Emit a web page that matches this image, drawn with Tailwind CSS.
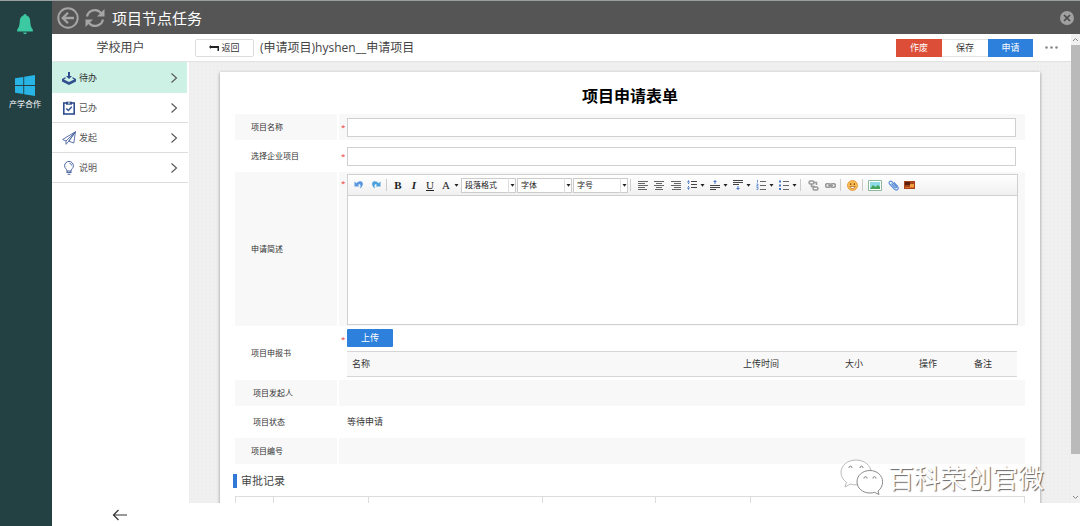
<!DOCTYPE html>
<html lang="zh-CN">
<head>
<meta charset="utf-8">
<title>项目节点任务</title>
<script src="https://cdn.jsdelivr.net/npm/@tailwindcss/browser@4"></script>
</head>
<body class="flex h-screen flex-col overflow-hidden border-t border-[#9a9f9f] bg-white font-['Open_Sans','Noto_Sans_CJK_SC',sans-serif] text-[#444]">
<svg class="hidden">
  <defs>
    <symbol id="chev" viewBox="0 0 8 12"><path d="M1.5 1.5 6.5 6l-5 4.5" fill="none" stroke="#555" stroke-width="1.1"/></symbol>
    <symbol id="caret" viewBox="0 0 5 3"><path d="M.5 0h4L2.500 2.700z" fill="#222"/></symbol>
  </defs>
</svg>
<div class="flex min-h-0 flex-1">
  <nav class="flex w-[52px] shrink-0 flex-col items-center bg-[#234143] pr-[2px]">
    <button aria-label="通知" class="mt-[13px]">
      <svg class="h-[21px] w-4" viewBox="0 0 16 21"><path d="M8 0a1.600 1.600 0 0 1 1.600 1.600C12 2.400 13 4.500 13.200 7c.2 4 .8 6.500 2.600 8.500v2H.2v-2C2 13.500 2.600 11 2.800 7 3 4.500 4 2.400 6.400 1.600A1.600 1.600 0 0 1 8 0zM6.200 18.400h3.600a1.800 1.800 0 0 1-3.600 0z" fill="#3cc8a0"/></svg>
    </button>
    <a href="#" class="mt-[40px] flex flex-col items-center text-[8px] leading-3 text-white">
      <svg class="h-[21px] w-5" viewBox="0 0 20 21"><path d="M0 3.300 8.300 2v8H0zM9.200 1.800 20 0v10H9.200zM0 11h8.300v8L0 17.800zM9.200 11H20v10L9.200 19.200z" fill="#28b5e6"/></svg>
      <span class="mt-[2px]">产学合作</span>
    </a>
  </nav>
  <div class="flex min-w-0 flex-1 flex-col">
    <header class="flex h-[33px] shrink-0 items-center bg-[#555] pl-[5px] pr-[6px]">
      <button aria-label="后退"><svg class="size-[22px]" viewBox="0 0 22 22" fill="none" stroke="#a5a5a5" stroke-width="2"><circle cx="11" cy="11" r="9.700"/><path d="M17 11H6M11 5.700 5.700 11l5.300 5.300" stroke-width="2.300"/></svg></button>
      <button aria-label="刷新" class="ml-[6px]"><svg class="size-5" viewBox="0 0 20 20"><path d="M2 8.500A8 8 0 0 1 16 5M18 11.500A8 8 0 0 1 4 15" fill="none" stroke="#a5a5a5" stroke-width="2.200"/><path d="M19.500 1v7.500H12zM.5 19v-7.500H8z" fill="#a5a5a5"/></svg></button>
      <h1 class="ml-[7px] flex-1 text-[15px] leading-6 text-white">项目节点任务</h1>
      <button aria-label="关闭"><svg class="size-[14px]" viewBox="0 0 14 14"><circle cx="7" cy="7" r="7" fill="#a0a0a0"/><path d="m4 4 6 6m0-6-6 6" stroke="#4a4a4a" stroke-width="1.700"/></svg></button>
    </header>
    <div class="flex min-h-0 flex-1">
      <aside class="w-[137px] shrink-0">
        <h2 class="flex h-[28px] items-center justify-center border-b border-[#e4e4e4] text-[12px] leading-4">学校用户</h2>
        <ul class="text-[9px] leading-4 text-[#555]">
          <li><a href="#" class="mr-[2px] flex h-[31px] items-center bg-[#cdf1e4] pl-[10px] pr-[9px] text-[#333]">
            <svg class="mr-[3px] size-[14px]" viewBox="0 0 14 14" fill="#2f4f8f"><path d="M6 1h2v4h2L7 8 4 5h2z"/><path d="M3.500 6 0 8v2.500L7 14l7-3.500V8l-3.500-2v1.500l1.700.9L7 11 1.800 8.400l1.700-.9z"/></svg>
            <span class="flex-1">待办</span><svg class="h-3 w-2"><use href="#chev"/></svg></a></li>
          <li><a href="#" class="mr-px flex h-[30px] items-center border-b border-[#ddd] pl-[10px] pr-[10px]">
            <svg class="mr-[3px] size-[14px]" viewBox="0 0 14 14" fill="none" stroke="#2f4f8f"><rect x="1.800" y="2" width="10.400" height="11" stroke-width="1.600"/><path d="m4.300 7.500 2 2 3.500-3.800" stroke-width="1.400"/><path d="M4 2.200h6" stroke-width="3"/><path d="M6 2h2" stroke="#fff"/></svg>
            <span class="flex-1">已办</span><svg class="h-3 w-2"><use href="#chev"/></svg></a></li>
          <li><a href="#" class="mr-px flex h-[30px] items-center border-b border-[#ddd] pl-[10px] pr-[10px]">
            <svg class="mr-[3px] size-[14px]" viewBox="0 0 14 14" fill="none" stroke="#4a659f" stroke-width=".9" stroke-linejoin="round"><path d="M13.400.8.6 8.500 4 10 13.400.8 11.800 12 6.800 10.200zM4 10v3.300l2.800-3.100M13.400.8 6.800 10.200"/></svg>
            <span class="flex-1">发起</span><svg class="h-3 w-2"><use href="#chev"/></svg></a></li>
          <li><a href="#" class="mr-px flex h-[30px] items-center border-b border-[#ddd] pl-[10px] pr-[10px]">
            <svg class="mr-[3px] size-[14px]" viewBox="0 0 14 14" fill="none" stroke="#4a659f" stroke-width="1"><path d="M5 10C5 8 2.600 7.400 2.600 4.800a4.400 4.400 0 0 1 8.800 0C11.400 7.400 9 8 9 10zM5 11.500h4M5.700 13.300h2.600M5 10v2M9 10v2M7.500 2.300c1.300.2 2 1 2.100 2.200"/></svg>
            <span class="flex-1">说明</span><svg class="h-3 w-2"><use href="#chev"/></svg></a></li>
        </ul>
      </aside>
      <main class="flex min-w-0 flex-1 flex-col">
        <div class="flex h-[28px] shrink-0 items-center border-b border-[#e2e2e2] pl-[6px] pr-[13px] text-[9px] leading-3">
          <button class="flex h-[18px] w-[59px] items-center justify-center rounded-[2px] border border-[#ddd] text-[#333]">
            <svg class="mr-[2px] h-[6px] w-[10px]" viewBox="0 0 10 6"><path d="M0 2 2 0v1h8v5H8.500V3H2v1z" fill="#222"/></svg>返回</button>
          <h2 class="ml-[6px] flex-1 text-[12px] leading-4">(申请项目)hyshen__申请项目</h2>
          <button class="h-[18px] w-[46px] bg-[#dc4e38] text-white">作废</button>
          <button class="h-[18px] w-[46px] border-y border-[#e4e4e4] text-[#333]">保存</button>
          <button class="h-[18px] w-[45px] bg-[#2d80dc] text-white">申请</button>
          <button aria-label="更多" class="ml-[12px]"><svg class="h-[3px] w-[13px]" viewBox="0 0 13 3" fill="#888"><circle cx="1.500" cy="1.500" r="1.300"/><circle cx="6.500" cy="1.500" r="1.300"/><circle cx="11.500" cy="1.500" r="1.300"/></svg></button>
        </div>
        <div class="min-h-0 flex-1 overflow-hidden bg-[#f0f0f0] bg-[linear-gradient(#00000002_1px,transparent_1px),linear-gradient(90deg,#00000002_1px,transparent_1px)] bg-[size:4px_4px] pl-[31px] pr-[31px] pt-[10px]">
          <form class="bg-white px-[15px] pb-10 pt-[15px] shadow-[0_1px_3px_#888]">
            <h3 class="mb-[9px] text-center text-[16px] font-bold leading-[18px] text-black">项目申请表单</h3>
            <div class="grid grid-cols-[102px_1fr] gap-x-[2px] gap-y-[3px] text-[8px] leading-3 text-[#333]">
              <label for="pname" class="flex items-center bg-[#f8f8f8] pl-[16px]">项目名称</label>
              <div class="flex h-[26px] items-center bg-[#f8f8f8] pr-[9px]"><span class="w-[8px] pl-[2px] text-[#e33]">*</span><input id="pname" class="h-[19px] min-w-0 flex-1 border border-[#d0d0d0] bg-white px-1"></div>
              <label for="cproj" class="flex items-center pl-[16px]">选择企业项目</label>
              <div class="flex h-[26px] items-center pr-[9px]"><span class="w-[8px] pl-[2px] text-[#e33]">*</span><input id="cproj" class="h-[19px] min-w-0 flex-1 border border-[#d0d0d0] bg-white px-1"></div>
              <label for="desc" class="flex items-center bg-[#f8f8f8] pl-[16px]">申请简述</label>
              <div class="flex h-[154px] bg-[#f8f8f8] pb-px pr-[7px] pt-[2px]">
                <span class="w-[8px] pl-[2px] pt-[3px] text-[#e33]">*</span>
                <div class="flex min-w-0 flex-1 flex-col border border-[#d0d0d0] bg-white">
                  <div class="flex h-[21px] shrink-0 items-center border-b border-[#d0d0d0] bg-linear-to-b from-white to-[#f0f0f0] pl-[2px] font-['Liberation_Serif','Noto_Sans_CJK_SC',serif] text-[#222]">
                    <button type="button" aria-label="撤销" class="flex w-[17px] justify-center"><svg class="size-[10px]" viewBox="0 0 10 10"><path d="M.5 1.500v5h5L4 5c1.500-1.500 3.500-.5 2 3.500C10 5.500 9.500 1.500 6.500 1.200 5 1 3.500 1.700 2.500 3.200z" fill="#5897e0"/></svg></button>
                    <button type="button" aria-label="重做" class="flex w-[17px] justify-center"><svg class="size-[10px] -scale-x-100" viewBox="0 0 10 10"><path d="M.5 1.500v5h5L4 5c1.500-1.500 3.500-.5 2 3.500C10 5.500 9.500 1.500 6.500 1.200 5 1 3.500 1.700 2.500 3.200z" fill="#4aa0dc"/></svg></button>
                    <i class="ml-[2px] mr-[3px] h-3 w-px bg-[#ccc]"></i>
                    <button type="button" class="w-4 text-[11px] font-bold">B</button>
                    <button type="button" class="w-4 text-[11px] font-bold italic">I</button>
                    <button type="button" class="w-4 text-[11px] underline">U</button>
                    <button type="button" class="mr-[2px] flex w-[21px] items-center text-[11px]"><span class="w-4">A</span><svg class="h-[3px] w-[5px]"><use href="#caret"/></svg></button>
                    <span class="relative mr-px w-[55px] font-['Noto_Sans_CJK_SC',sans-serif]"><select aria-label="段落格式" class="block h-[15px] w-full appearance-none border border-[#ccc] bg-white pl-[3px]"><option>段落格式</option></select><svg class="pointer-events-none absolute right-px top-[6px] h-[3px] w-[5px]"><use href="#caret"/></svg><i class="pointer-events-none absolute right-[7px] top-0 h-[15px] w-px bg-[#ddd]"></i></span>
                    <span class="relative mr-px w-[55px] font-['Noto_Sans_CJK_SC',sans-serif]"><select aria-label="字体" class="block h-[15px] w-full appearance-none border border-[#ccc] bg-white pl-[3px]"><option>字体</option></select><svg class="pointer-events-none absolute right-px top-[6px] h-[3px] w-[5px]"><use href="#caret"/></svg><i class="pointer-events-none absolute right-[7px] top-0 h-[15px] w-px bg-[#ddd]"></i></span>
                    <span class="relative w-[55px] font-['Noto_Sans_CJK_SC',sans-serif]"><select aria-label="字号" class="block h-[15px] w-full appearance-none border border-[#ccc] bg-white pl-[3px]"><option>字号</option></select><svg class="pointer-events-none absolute right-px top-[6px] h-[3px] w-[5px]"><use href="#caret"/></svg><i class="pointer-events-none absolute right-[7px] top-0 h-[15px] w-px bg-[#ddd]"></i></span>
                    <i class="ml-[2px] mr-[4px] h-3 w-px bg-[#ccc]"></i>
                    <button type="button" aria-label="左对齐" class="flex w-4 justify-center"><svg class="h-[9px] w-[10px]" viewBox="0 0 10 9" stroke="#666"><path d="M0 .5h10M0 2.500h7M0 4.500h10M0 6.500h7M0 8.500h9"/></svg></button>
                    <button type="button" aria-label="居中" class="flex w-4 justify-center"><svg class="h-[9px] w-[10px]" viewBox="0 0 10 9" stroke="#666"><path d="M0 .5h10M2 2.500h6M0 4.500h10M2 6.500h6M1 8.500h8"/></svg></button>
                    <button type="button" aria-label="右对齐" class="flex w-[17px] justify-center"><svg class="h-[9px] w-[10px]" viewBox="0 0 10 9" stroke="#666"><path d="M0 .5h10M3 2.500h7M0 4.500h10M3 6.500h7M1 8.500h9"/></svg></button>
                    <button type="button" aria-label="行高" class="mr-[2px] flex w-[21px] items-center"><svg class="mx-[3px] size-[10px]" viewBox="0 0 10 10"><path d="M4 1.500h6M4 4.500h6M4 7.500h6" stroke="#444"/><path d="M1.500 0 3 2.500H0zM1.500 10 0 7.500h3zM1 3h1v1H1zM1 6h1v1H1z" fill="#4a78c8"/></svg><svg class="h-[3px] w-[5px]"><use href="#caret"/></svg></button>
                    <button type="button" aria-label="段前距" class="mr-[2px] flex w-[21px] items-center"><svg class="mx-[3px] size-[10px]" viewBox="0 0 10 10"><path d="M0 5.500h10M0 7.500h10M0 9.500h6" stroke="#444"/><path d="M5 0 7 2H5.500v2h-1V2H3z" fill="#4a78c8"/></svg><svg class="h-[3px] w-[5px]"><use href="#caret"/></svg></button>
                    <button type="button" aria-label="段后距" class="mr-[2px] flex w-[21px] items-center"><svg class="mx-[3px] size-[10px]" viewBox="0 0 10 10"><path d="M0 .5h10M0 2.500h10M0 4.500h6" stroke="#444"/><path d="M5 10 3 8h1.500V6h1v2H7z" fill="#4a78c8"/></svg><svg class="h-[3px] w-[5px]"><use href="#caret"/></svg></button>
                    <button type="button" aria-label="有序列表" class="mr-[2px] flex w-[21px] items-center"><svg class="mx-[3px] size-[10px]" viewBox="0 0 10 10"><path d="M4 1.500h6M4 5.500h6M4 9.500h6" stroke="#666"/><path d="M1.500 0v2.500M.5 4h1.500v1l-1.500 1h2M.5 7.500H2v2H.5" fill="none" stroke="#4a78c8" stroke-width=".8"/></svg><svg class="h-[3px] w-[5px]"><use href="#caret"/></svg></button>
                    <button type="button" aria-label="无序列表" class="flex w-[21px] items-center"><svg class="mx-[3px] size-[10px]" viewBox="0 0 10 10"><path d="M4 1.500h6M4 5.500h6M4 9.500h6" stroke="#666"/><path d="M0 .5h2v2H0zM0 4.500h2v2H0zM0 8h2v2H0z" fill="#4a78c8"/></svg><svg class="h-[3px] w-[5px]"><use href="#caret"/></svg></button>
                    <i class="ml-[3px] mr-[4px] h-3 w-px bg-[#ccc]"></i>
                    <button type="button" aria-label="取消链接" class="flex w-[17px] justify-center"><svg class="size-[11px]" viewBox="0 0 11 11" fill="none" stroke="#999" stroke-width="1.500"><rect x="1" y="1" width="5" height="3" rx="1.500"/><rect x="5" y="7" width="5" height="3" rx="1.500"/><path d="M6 2.500h2.500V5M3.500 4v2.500H7"/></svg></button>
                    <button type="button" aria-label="链接" class="flex w-4 justify-center"><svg class="h-[5px] w-[11px]" viewBox="0 0 11 5" fill="none" stroke="#999" stroke-width="1.500"><rect x=".7" y=".7" width="4.600" height="3.600" rx="1.500"/><rect x="5.700" y=".7" width="4.600" height="3.600" rx="1.500"/><path d="M3 2.500h5"/></svg></button>
                    <i class="ml-[2px] mr-[3px] h-3 w-px bg-[#ccc]"></i>
                    <button type="button" aria-label="表情" class="flex w-4 justify-center"><svg class="size-[11px]" viewBox="0 0 11 11"><circle cx="5.500" cy="5.500" r="5" fill="#f8bd55" stroke="#e09030" stroke-width=".8"/><path d="M3.700 3.200v1.800M7.300 3.200v1.800" stroke="#8a4a10" stroke-width="1.200"/><path d="M2.800 6.500c1 2.600 4.400 2.600 5.400 0z" fill="#fff" stroke="#a65a18" stroke-width=".7"/></svg></button>
                    <i class="ml-[2px] mr-[4px] h-3 w-px bg-[#ccc]"></i>
                    <button type="button" aria-label="图片" class="flex w-4 justify-center"><svg class="h-[11px] w-[14px]" viewBox="0 0 14 11"><path d="M.5.5h13v10H.5z" fill="#fff" stroke="#8ab89a"/><path d="M2 2h10v7H2z" fill="#8edbe8"/><path d="m2 9 3-4 2.500 2L10 5l2 2v2z" fill="#43a35a"/></svg></button>
                    <button type="button" aria-label="附件" class="ml-[2px] flex w-4 justify-center"><svg class="size-[11px]" viewBox="0 0 11 11" fill="none" stroke="#5c8fd8" stroke-width="1.200"><path d="M3.500 3.500 7 7.500c1 1 2-.2 1.300-1L4 1.700C2.300.2.200 2.200 1.600 4l4.800 5.200c2.200 2.200 5-.4 3.200-2.700L6 2.500"/></svg></button>
                    <button type="button" aria-label="视频" class="flex w-4 justify-center"><svg class="h-2 w-[11px]" viewBox="0 0 11 8"><path d="M0 0h11v8H0z" fill="#a8431a"/><path d="M1 1h5v3H1z" fill="#5a1f0c"/><path d="M6 3h4v3H6z" fill="#f0a040"/><path d="M1 6h9v1H1z" fill="#d8702a"/></svg></button>
                  </div>
                  <textarea id="desc" class="min-h-0 flex-1 resize-none bg-white p-1 outline-none"></textarea>
                </div>
              </div>
              <div class="flex items-center pl-[16px]">项目申报书</div>
              <div class="flex h-[48px] pr-[8px]">
                <span class="w-[8px] pl-[2px] pt-[4px] text-[#e33]">*</span>
                <div class="min-w-0 flex-1 text-[9px]">
                  <button type="button" class="block h-[18px] w-[46px] rounded-[1px] bg-[#2d80dc] text-white">上传</button>
                  <table class="mt-[4px] w-full table-fixed border-y border-[#d6d6d6] bg-[#f8f8f8]">
                    <thead><tr class="h-[25px] text-center">
                      <th class="pl-[5px] text-left font-normal">名称</th><th class="w-[94px] font-normal">上传时间</th><th class="w-[92px] font-normal">大小</th><th class="w-[56px] font-normal">操作</th><th class="w-[54px] font-normal">备注</th><th class="w-[7px]"></th>
                    </tr></thead>
                  </table>
                </div>
              </div>
              <div class="flex h-[26px] items-center bg-[#f8f8f8] pl-[18px]">项目发起人</div>
              <div class="bg-[#f8f8f8]"></div>
              <div class="flex h-[26px] items-center pl-[18px]">项目状态</div>
              <div class="flex items-center pl-[8px] text-[9px]">等待申请</div>
              <div class="flex h-[26px] items-center bg-[#f8f8f8] pl-[16px]">项目编号</div>
              <div class="bg-[#f8f8f8]"></div>
            </div>
            <h4 class="-ml-[2px] mt-[10px] border-l-4 border-[#3079d6] pl-[4px] text-[11px] leading-[14px]">审批记录</h4>
            <table class="mt-[8px] w-full table-fixed border-collapse">
              <tbody><tr class="h-6"><td class="w-[38px] border border-[#ddd]"></td><td class="w-[95px] border border-[#ddd]"></td><td class="w-[174px] border border-[#ddd]"></td><td class="w-[113px] border border-[#ddd]"></td><td class="w-[95px] border border-[#ddd]"></td><td class="border border-[#ddd]"></td></tr></tbody>
            </table>
          </form>
        </div>
      </main>
      <div class="flex w-[9px] shrink-0 flex-col items-center bg-[#f0f0f0]">
        <svg class="my-[3px] h-[5px] w-[7px] shrink-0" viewBox="0 0 7 5"><path d="m1 4 2.500-2.500L6 4" fill="none" stroke="#888"/></svg>
        <div class="w-full flex-1 bg-[#bababa]"></div>
        <svg class="mb-[3px] mt-[41px] h-[5px] w-[7px] shrink-0" viewBox="0 0 7 5"><path d="m1 1 2.500 2.500L6 1" fill="none" stroke="#888"/></svg>
      </div>
    </div>
    <footer class="flex h-[23px] shrink-0 items-center bg-white pl-[60px]">
      <button aria-label="收起菜单"><svg class="h-3 w-4" viewBox="0 0 16 12" fill="none" stroke="#333" stroke-width="1.200"><path d="M15 6H1.500M6.500 1 1.500 6l5 5"/></svg></button>
    </footer>
  </div>
</div>
<div class="pointer-events-none absolute bottom-[30px] right-[36px] flex items-center">
  <svg class="mr-[5px] h-[37px] w-[43px]" viewBox="0 0 43 37" fill="#fff" stroke="#8a8a8a" stroke-width="1"><path d="M16 1C7.500 1 1 6.500 1 13.500c0 4 2 7.500 5.500 9.800L5 28l5.500-3c2 .6 4 .9 6 .8C24 26 31 20.500 31 13.500S24.500 1 16 1z" stroke="#bbb"/><path d="M30 11.500c-7.500 0-13 5-13 11.300S22.500 34 30 34c1.500 0 3-.2 4.500-.7L39 35.500 38 32c3-2.200 4.600-5.500 4.600-9.200 0-6.300-5.600-11.300-12.600-11.300z"/><path d="M9 9c0-2.500 3-2.500 3 0M20 9c0-2.500 3-2.500 3 0M24 19.500c0-2.500 3-2.500 3 0M33 19.500c0-2.500 3-2.500 3 0" fill="none" stroke="#777"/></svg>
  <span class="text-[26px] leading-[34px] text-white [text-shadow:1px_1px_1px_#666]">百科荣创官微</span>
</div>
</body>
</html>
